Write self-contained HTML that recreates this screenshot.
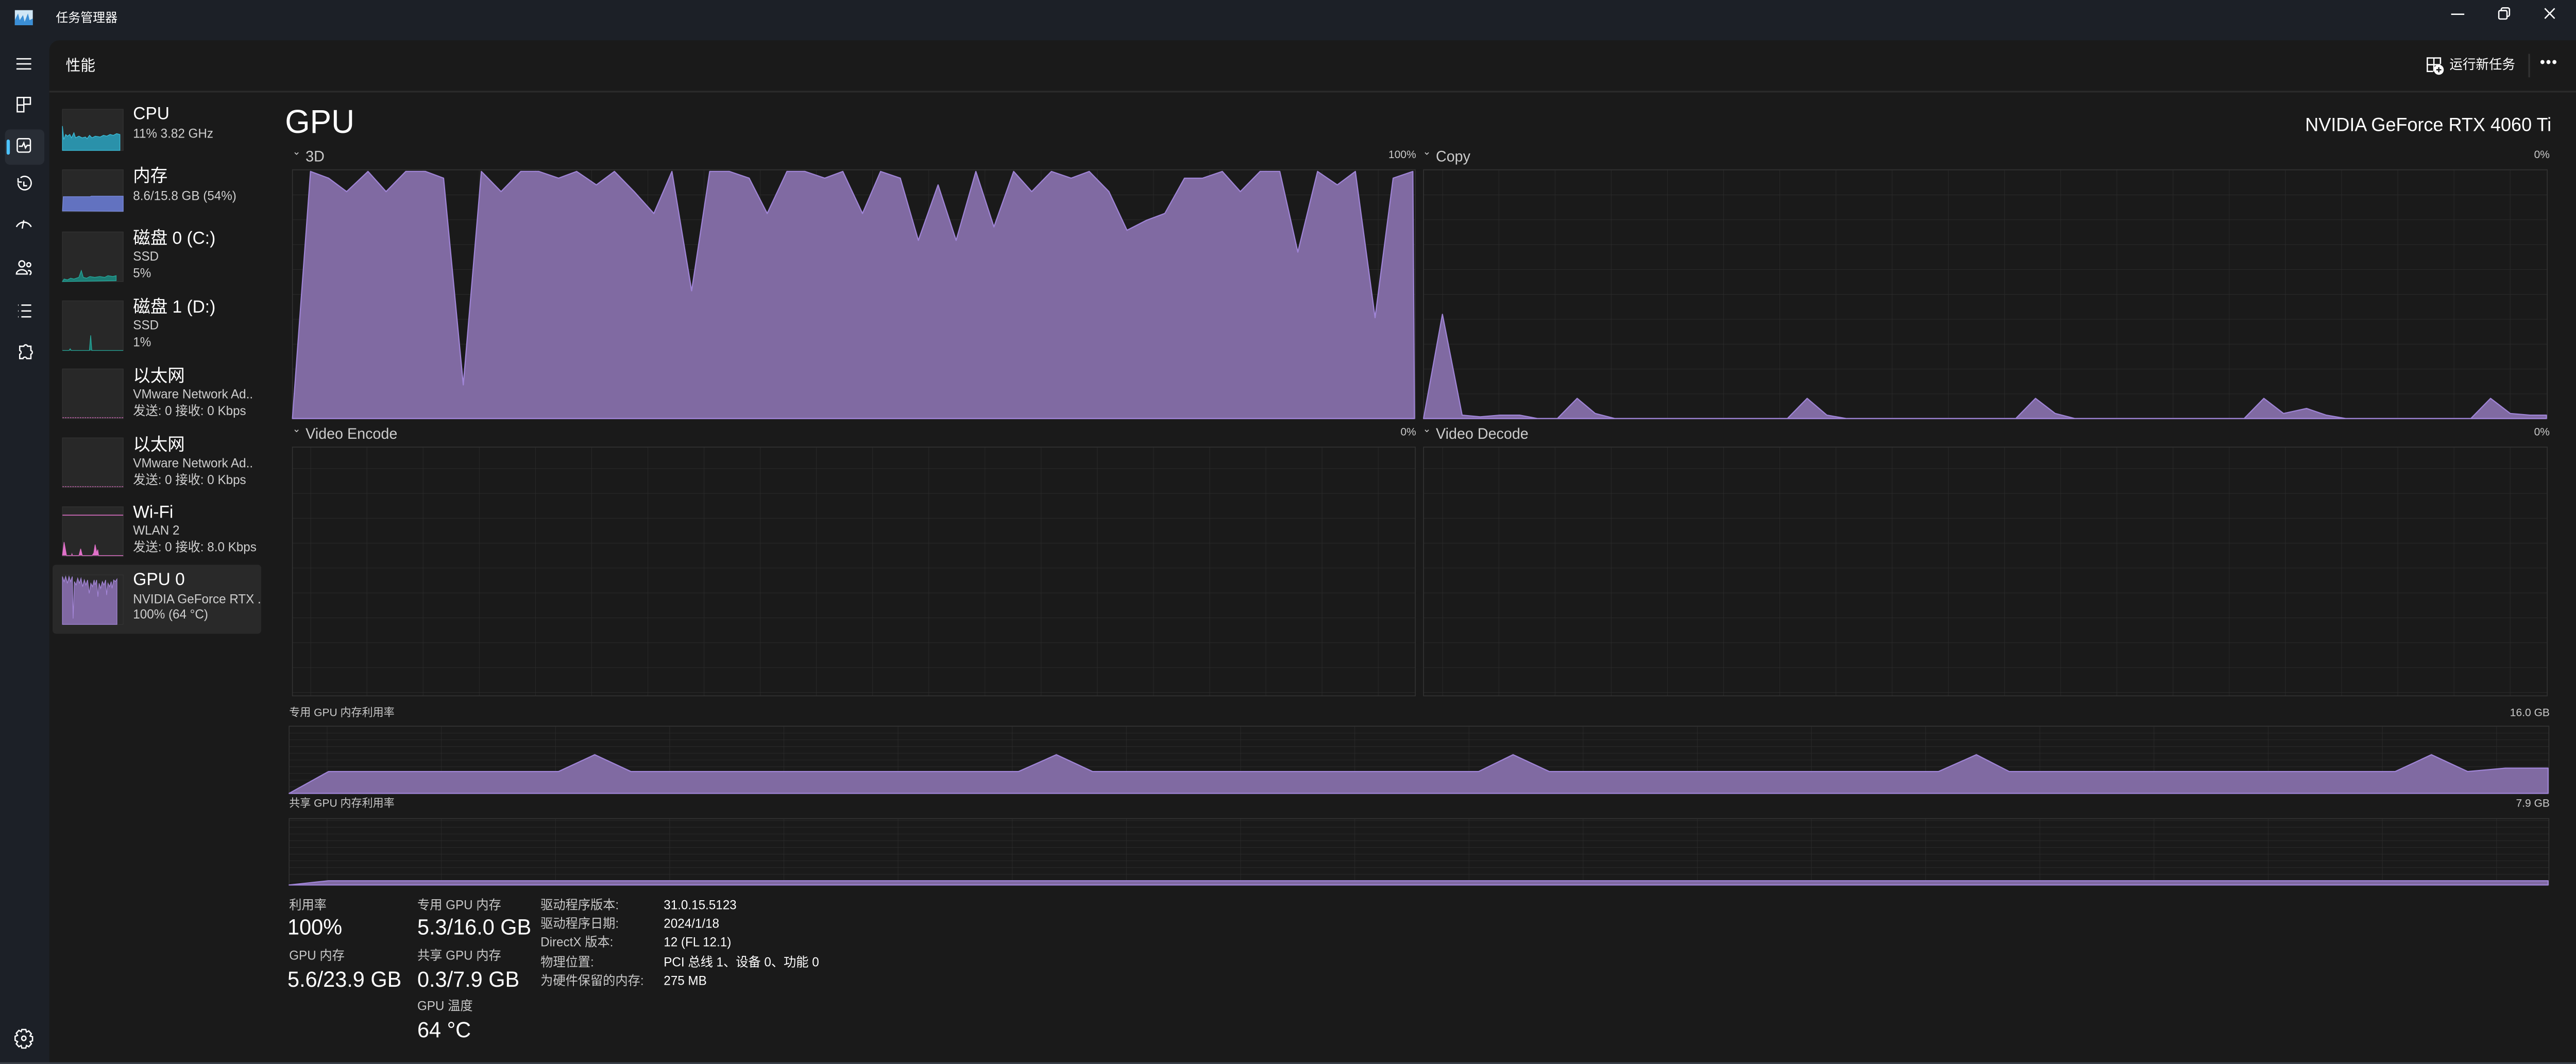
<!DOCTYPE html>
<html><head><meta charset="utf-8">
<style>
html,body{margin:0;padding:0;width:100%;height:100%;overflow:hidden;background:#1a1a1a}
#w{position:absolute;left:0;top:0;width:1568px;height:633px;transform:scale(3.26531);transform-origin:0 0;background:#1c2027;font-family:"Liberation Sans","Noto Sans CJK SC",sans-serif;color:#fff}
.a{position:absolute;white-space:nowrap;line-height:1}
.main{position:absolute;left:29.5px;top:24px;width:1538.5px;height:608px;background:#1a1a1a;border-top-left-radius:6px}
.g{color:#ccc}
.sb .t{font-size:10.5px;color:#fff}
.sb .s{font-size:7.6px;color:#cfcfcf}
.lbl{font-size:7.6px;color:#c8c8c8}
.val{font-size:13px;color:#fff}
.sm{font-size:6.6px;color:#c8c8c8}
</style></head><body>
<div id="w">
<svg class="a" style="left:9px;top:6px" width="11" height="9" viewBox="0 0 11 9"><rect width="11" height="9" fill="#cfe6f5"/><path d="M0 9 L0 6 L2 2 L3 6 L5 3 L6 7 L8 2 L9 6 L11 5 L11 9Z" fill="#3b8fd6"/></svg>
<div class="a" style="left:34px;top:6.5px;font-size:7.5px;color:#fff">任务管理器</div>
<svg class="a" style="left:1489px;top:3px" width="70" height="12" viewBox="0 0 70 12"><path d="M3 5.5h8" stroke="#fff" stroke-width=".8"/><rect x="32" y="3.3" width="5" height="5" rx=".8" fill="none" stroke="#fff" stroke-width=".8"/><path d="M33.5 3.3v-.6a1 1 0 0 1 1-1h3a1 1 0 0 1 1 1v3a1 1 0 0 1-1 1h-.5" fill="none" stroke="#fff" stroke-width=".8"/><path d="M60 2l6 6M66 2l-6 6" stroke="#fff" stroke-width=".8"/></svg>
<div class="a" style="left:3px;top:77px;width:24px;height:21px;background:#282d35;border-radius:3px"></div>
<div class="a" style="left:4px;top:83px;width:2px;height:9px;background:#4cc2ff;border-radius:1px"></div>
<svg class="a" style="left:0;top:30px" width="30" height="190" viewBox="0 0 30 190"><g fill="none" stroke="#fff" stroke-width=".8">
<path d="M10 5h9M10 8h9M10 11h9"/>
<path d="M10.5 28h4v4.5h-4zM14.5 28h4v4h-4zM10.5 32.5h4v4h-4z"/>
<rect x="10.5" y="52.5" width="8" height="8" rx="1.2"/><path d="M11.5 57h2l1-2 1 3 1-1.5h2"/>
<path d="M11 79a4 4 0 1 0 1.5-3.2M11 76v2.3h2.3M14.5 78v2.5h2"/>
<path d="M10 105a5 5 0 0 1 9 0M14.5 101l-1 5"/>
<circle cx="13.3" cy="127" r="1.8"/><path d="M10 133a3.3 2.5 0 0 1 6.6 0z"/><circle cx="17.5" cy="127.5" r="1.2"/><path d="M17 131h1a2 1.5 0 0 1 0 2.5"/>
<path d="M11 151.5h.3M11 155h.3M11 158.5h.3M13 151.5h6M13 155h6M13 158.5h6"/>
<path d="M12 176h2.5a1.2 1.2 0 0 1 2.3 0h2v2.5a1.2 1.2 0 0 1 0 2.3v2.5h-2.5a1.2 1.2 0 0 0-2.3 0h-2v-2.5a1.2 1.2 0 0 0 0-2.3z"/>
</g></svg>
<svg class="a" style="left:8px;top:611px" width="13" height="13" viewBox="0 0 13 13"><g fill="none" stroke="#fff" stroke-width=".8"><path d="M5.3 1.5h2.4l.4 1.5 1.4-.7 1.6 1.7-.8 1.3 1.5.5v2.4l-1.5.5.8 1.3-1.6 1.7-1.4-.7-.4 1.5H5.3l-.4-1.5-1.4.7-1.6-1.7.8-1.3L1.2 7.9V5.5l1.5-.5-.8-1.3 1.6-1.7 1.4.7z"/><circle cx="6.5" cy="6.7" r="1.3"/></g></svg>

<div class="main"></div>
<div class="a" style="left:29.5px;top:54px;width:1538.5px;height:1px;background:#2b2b2b"></div>
<div class="a" style="left:40px;top:34.5px;font-size:9px">性能</div>
<svg class="a" style="left:1476px;top:33px" width="12" height="12" viewBox="0 0 12 12"><g fill="none" stroke="#fff" stroke-width=".8"><path d="M5 9.5H1.5v-8h8V5M1.5 5.5h8M5.5 1.5v8"/></g><circle cx="8.5" cy="8.5" r="3" fill="#fff"/><path d="M8.5 7v3M7 8.5h3" stroke="#1a1a1a" stroke-width=".8"/></svg>
<div class="a" style="left:1491px;top:35px;font-size:8px">运行新任务</div>
<div class="a" style="left:1539px;top:32px;width:.6px;height:14px;background:#333"></div>
<div class="a" style="left:1546px;top:33px;font-size:9px;letter-spacing:.5px">•••</div>

<div class="a" style="left:32px;top:336px;width:127px;height:41px;background:#292929;border-radius:2px"></div>
<svg class="a" style="left:0;top:0" width="160" height="380" viewBox="0 0 160 380">
<g fill="#282828" stroke="#333" stroke-width=".4">
<rect x="38" y="65" width="37" height="24.5"/><rect x="38" y="101" width="37" height="25"/>
<rect x="38" y="138" width="37" height="29.5"/><rect x="38" y="179" width="37" height="29.5"/>
<rect x="38" y="219.5" width="37" height="29.5"/><rect x="38" y="260.5" width="37" height="29.5"/>
<rect x="38" y="301.5" width="37" height="29.5"/><rect x="38" y="342" width="37" height="29.5"/></g>
<path d="M38 89.5V75l.8 8 1.2-3 1 1 1.5-1 1 2 1.5-3 1 3 2-1 2 1 2-.5 1 1 1.5-2 1.5 1.5 2-1 3 .5 2-1 2 .5 2-1 2 .5 2-1 2 .5V89.5z" fill="#2a91aa" stroke="#3cc0dc" stroke-width=".4"/>
<path d="M38 125.5l.5-8.5h16.5l.5-.3H75v9z" fill="#6272c0" stroke="#7b8ce0" stroke-width=".4"/>
<path d="M38 167.5l1-1.5 2 .5 2-1 2 .5 3-1 1.5-4 1.2 4 2 .5 2-1 3 .5 3-.5 3 .5 2-1 3 .5 2-.5v3z" fill="#1d7c74" stroke="#26a89b" stroke-width=".4"/>
<path d="M38 208.5h4l.7-1 .7 1h11l.8-9 .7 9H75" fill="#1d7c74" stroke="#26a89b" stroke-width=".4"/>
<path d="M38 248.5h37M38 289.5h37" stroke="#d06ab8" stroke-width=".4" stroke-dasharray="1 .5"/>
<path d="M38 306.5h37" stroke="#e070c8" stroke-width=".5"/>
<path d="M38 330.5l1-8 1.5 8h3l.3-1 .3 1h4l1-4 1 4h6l1-1.5 .8-5 1 5 .6-2 .5 3.5H75" fill="#e070c8" stroke="#e070c8" stroke-width=".4"/>
<path d="M38 371.5V343l1 3 1-3 1 4 1-4 1 3 1-3 .5 25 .8-22 1 2 1-4 1 3 1-3 1 5 1-4 1 3 1-3 1 8 1-6 1 2 1-4 .5 3 1-3 .8 10 .7-8 1 3 1-4 1 2 1-3 .6 9 .8-7 1 2 1-3 .5 4 1-5 1 1 1-1.5V371.5z" fill="#8068a3" stroke="#a486d8" stroke-width=".4"/>
</svg>
<div class="sb">
<div class="a t" style="left:81px;top:62.5px">CPU</div><div class="a s" style="left:81px;top:75.5px">11% 3.82 GHz</div>
<div class="a t" style="left:81px;top:99.5px">内存</div><div class="a s" style="left:81px;top:112.5px">8.6/15.8 GB (54%)</div>
<div class="a t" style="left:81px;top:136.5px">磁盘 0 (C:)</div><div class="a s" style="left:81px;top:149px">SSD</div><div class="a s" style="left:81px;top:158.5px">5%</div>
<div class="a t" style="left:81px;top:177.5px">磁盘 1 (D:)</div><div class="a s" style="left:81px;top:190px">SSD</div><div class="a s" style="left:81px;top:199.5px">1%</div>
<div class="a t" style="left:81px;top:218.5px">以太网</div><div class="a s" style="left:81px;top:231px">VMware Network Ad..</div><div class="a s" style="left:81px;top:240.5px">发送: 0 接收: 0 Kbps</div>
<div class="a t" style="left:81px;top:259.5px">以太网</div><div class="a s" style="left:81px;top:272px">VMware Network Ad..</div><div class="a s" style="left:81px;top:281.5px">发送: 0 接收: 0 Kbps</div>
<div class="a t" style="left:81px;top:299.5px">Wi-Fi</div><div class="a s" style="left:81px;top:312px">WLAN 2</div><div class="a s" style="left:81px;top:321.5px">发送: 0 接收: 8.0 Kbps</div>
<div class="a t" style="left:81px;top:340px">GPU 0</div><div class="a s" style="left:81px;top:352.5px">NVIDIA GeForce RTX .</div><div class="a s" style="left:81px;top:362px">100% (64 °C)</div>
</div>

<div class="a" style="left:173.5px;top:63.5px;font-size:19.5px">GPU</div>
<div class="a" style="right:15px;top:69.5px;font-size:11.3px">NVIDIA GeForce RTX 4060 Ti</div>

<div class="a g" style="left:178px;top:88px;font-size:6px">⌄</div><div class="a g" style="left:186px;top:88.5px;font-size:9px">3D</div>
<div class="a sm" style="right:706px;top:90px">100%</div>
<div class="a g" style="left:866px;top:88px;font-size:6px">⌄</div><div class="a g" style="left:874px;top:88.5px;font-size:9px">Copy</div>
<div class="a sm" style="right:16px;top:90px">0%</div>
<div class="a g" style="left:178px;top:253px;font-size:6px">⌄</div><div class="a g" style="left:186px;top:253.5px;font-size:9px">Video Encode</div>
<div class="a sm" style="right:706px;top:255px">0%</div>
<div class="a g" style="left:866px;top:253px;font-size:6px">⌄</div><div class="a g" style="left:874px;top:253.5px;font-size:9px">Video Decode</div>
<div class="a sm" style="right:16px;top:255px">0%</div>
<div class="a sm" style="left:176px;top:421.5px">专用 GPU 内存利用率</div>
<div class="a sm" style="right:16px;top:421.5px">16.0 GB</div>
<div class="a sm" style="left:176px;top:475.5px">共享 GPU 内存利用率</div>
<div class="a sm" style="right:16px;top:475.5px">7.9 GB</div>

<svg class="a" style="left:0;top:0" width="1568" height="633" viewBox="0 0 1568 633">
<defs>
<pattern id="p1" x="189" y="101" width="34.2" height="14.8" patternUnits="userSpaceOnUse"><path d="M0 0v14.8M0 0h34.2" stroke="#2c2c2c" stroke-width=".5" fill="none"/></pattern>
<pattern id="p2" x="878" y="101" width="34.2" height="14.8" patternUnits="userSpaceOnUse"><path d="M0 0v14.8M0 0h34.2" stroke="#2c2c2c" stroke-width=".5" fill="none"/></pattern>
<pattern id="p3" x="199" y="432" width="69.5" height="4" patternUnits="userSpaceOnUse"><path d="M0 0v4M0 0h69.5" stroke="#2c2c2c" stroke-width=".5" fill="none"/></pattern>
</defs>
<g stroke="#333" stroke-width=".5">
<rect x="178" y="101" width="683.5" height="148" fill="url(#p1)"/>
<rect x="866.5" y="101" width="684" height="148" fill="url(#p2)"/>
<rect x="178" y="266" width="683.5" height="148" fill="url(#p1)"/>
<rect x="866.5" y="266" width="684" height="148" fill="url(#p2)"/>
<rect x="176" y="432" width="1375.5" height="40" fill="url(#p3)"/>
<rect x="176" y="487" width="1375.5" height="39.5" fill="url(#p3)"/>
</g>
<g fill="#806aa2" stroke="#9f84d6" stroke-width=".7" stroke-linejoin="round">
<path d="M178 249L189 102 200 106 211 114 224 102 235 114 247 102 259 102 270 106 282 229 293 102 305 114 317 102 328 102 340 106 351 102 363 110 374 102 386 114 398 127 409 102 421 173 432 102 444 102 456 106 467 127 479 102 490 102 502 106 513 102 525 127 536 102 548 106 559 143 571 110 582 143 594 102 605 135 617 102 628 114 640 102 652 106 663 102 675 114 686 137 698 131 709 127 721 106 732 106 744 102 755 114 767 102 779 102 790 150 802 102 814 110 825 102 837 189 848 106 860 102 861 249Z"/>
<path d="M866.5 249L878 187 890 247 901 248 913 247 925 247 936 249 948 249 960 237 971 246 983 249 1088 249 1100 237 1112 247 1124 249 1227 249 1239 237 1251 246 1263 249 1366 249 1378 237 1390 246 1404 243 1416 247 1428 249 1504 249 1516 237 1528 246 1540 247 1550 247 1550 249Z"/>
<path d="M176 472L200 459 340 459 362 449 384 459 620 459 643 449 665 459 900 459 921 449 943 459 1180 459 1203 449 1223 459 1458 459 1480 449 1502 459 1525 457 1551 457 1551 472Z"/>
<path d="M176 526.5L200 524 1551 524 1551 526.5Z"/>
</g>
</svg>

<div class="a lbl" style="left:176px;top:535px">利用率</div>
<div class="a val" style="left:175px;top:545px">100%</div>
<div class="a lbl" style="left:176px;top:565px">GPU 内存</div>
<div class="a val" style="left:175px;top:575.5px">5.6/23.9 GB</div>
<div class="a lbl" style="left:254px;top:535px">专用 GPU 内存</div>
<div class="a val" style="left:254px;top:545px">5.3/16.0 GB</div>
<div class="a lbl" style="left:254px;top:565px">共享 GPU 内存</div>
<div class="a val" style="left:254px;top:575.5px">0.3/7.9 GB</div>
<div class="a lbl" style="left:254px;top:595px">GPU 温度</div>
<div class="a val" style="left:254px;top:605.5px">64 °C</div>
<div class="a lbl" style="left:329px;top:535px">驱动程序版本:</div><div class="a lbl" style="left:404px;top:535px;color:#fff">31.0.15.5123</div>
<div class="a lbl" style="left:329px;top:546px">驱动程序日期:</div><div class="a lbl" style="left:404px;top:546px;color:#fff">2024/1/18</div>
<div class="a lbl" style="left:329px;top:557px">DirectX 版本:</div><div class="a lbl" style="left:404px;top:557px;color:#fff">12 (FL 12.1)</div>
<div class="a lbl" style="left:329px;top:569px">物理位置:</div><div class="a lbl" style="left:404px;top:569px;color:#fff">PCI 总线 1、设备 0、功能 0</div>
<div class="a lbl" style="left:329px;top:580px">为硬件保留的内存:</div><div class="a lbl" style="left:404px;top:580px;color:#fff">275 MB</div>
<div class="a" style="left:0;top:632px;width:1568px;height:1px;background:#3a4048"></div>
</div>
<script>
(function(){
var w=window.innerWidth||5120,h=window.innerHeight||2066;
document.getElementById('w').style.transform='scale('+(w/1568)+','+(h/633)+')';
})();
</script>
</body></html>
